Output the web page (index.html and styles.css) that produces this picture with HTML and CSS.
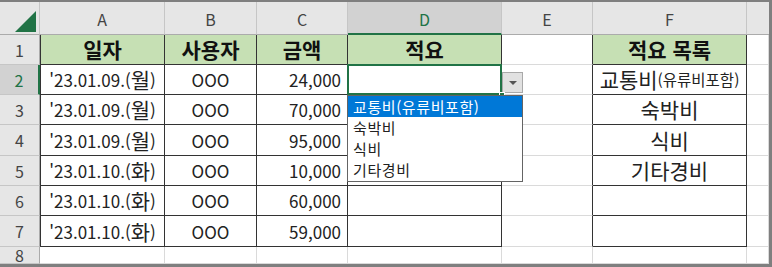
FILE: index.html
```html
<!DOCTYPE html>
<html lang="ko">
<head>
<meta charset="utf-8">
<link rel="stylesheet" href="styles.css">
</head>
<body>
<div class="frame">
  <div class="sheet">
    <div class="ch corner"><svg class="tri" width="21" height="21" viewBox="0 0 21 21"><polygon points="21,0 21,21 0,21" fill="#217346"/></svg></div>
    <div class="ch">A</div>
    <div class="ch">B</div>
    <div class="ch">C</div>
    <div class="ch sel">D</div>
    <div class="ch">E</div>
    <div class="ch">F</div>
    <div class="ch last"></div>

    <div class="rh">1</div>
    <div class="c t hd first">일자</div>
    <div class="c t hd">사용자</div>
    <div class="c t hd">금액</div>
    <div class="c t hd">적요</div>
    <div class="c e"></div>
    <div class="c t hd">적요 목록</div>
    <div class="c g"></div>

    <div class="rh rsel">2</div>
    <div class="c t first">'23.01.09.(<span class="k">월</span>)</div>
    <div class="c t">OOO</div>
    <div class="c t num">24,000</div>
    <div class="c t active"><span class="handle"></span><span class="ddbtn"><span class="ddarrow"></span></span>
      <div class="ddlist">
        <div class="dditem on">교통비(유류비포함)</div>
        <div class="dditem">숙박비</div>
        <div class="dditem">식비</div>
        <div class="dditem">기타경비</div>
      </div>
    </div>
    <div class="c e"></div>
    <div class="c t"><span class="k">교통비</span><span class="small">(유류비포함)</span></div>
    <div class="c g"></div>

    <div class="rh">3</div>
    <div class="c t first">'23.01.09.(<span class="k">월</span>)</div>
    <div class="c t">OOO</div>
    <div class="c t num">70,000</div>
    <div class="c t"></div>
    <div class="c e"></div>
    <div class="c t"><span class="k">숙박비</span></div>
    <div class="c g"></div>

    <div class="rh">4</div>
    <div class="c t first">'23.01.09.(<span class="k">월</span>)</div>
    <div class="c t">OOO</div>
    <div class="c t num">95,000</div>
    <div class="c t"></div>
    <div class="c e"></div>
    <div class="c t"><span class="k">식비</span></div>
    <div class="c g"></div>

    <div class="rh">5</div>
    <div class="c t first">'23.01.10.(<span class="k">화</span>)</div>
    <div class="c t">OOO</div>
    <div class="c t num">10,000</div>
    <div class="c t"></div>
    <div class="c e"></div>
    <div class="c t"><span class="k">기타경비</span></div>
    <div class="c g"></div>

    <div class="rh">6</div>
    <div class="c t first">'23.01.10.(<span class="k">화</span>)</div>
    <div class="c t">OOO</div>
    <div class="c t num">60,000</div>
    <div class="c t"></div>
    <div class="c e"></div>
    <div class="c t"></div>
    <div class="c g"></div>

    <div class="rh">7</div>
    <div class="c t first">'23.01.10.(<span class="k">화</span>)</div>
    <div class="c t">OOO</div>
    <div class="c t num">59,000</div>
    <div class="c t"></div>
    <div class="c e"></div>
    <div class="c t"></div>
    <div class="c g"></div>

    <div class="rh">8</div>
    <div class="c g"></div>
    <div class="c g"></div>
    <div class="c g"></div>
    <div class="c g"></div>
    <div class="c g"></div>
    <div class="c g"></div>
    <div class="c g"></div>
  </div>
</div>
</body>
</html>
```

FILE: styles.css
```css
* { box-sizing: border-box; }
html, body { margin: 0; padding: 0; background: #fff; }
body { font-family: "Noto Sans CJK KR", "Noto Sans", sans-serif; color: #222; }

.frame {
  width: 772px;
  height: 267px;
  border-top: 2px solid #7f7f7f;
  border-right: 3px solid #7f7f7f;
  border-bottom: 3px solid #7f7f7f;
  overflow: hidden;
}

.sheet {
  display: grid;
  grid-template-columns: 40px 125px 92px 91px 154px 91px 154px 22px;
  grid-template-rows: 33px 30px 30px 30px 31px 30px 30px 31px 17px;
  height: 262px;
}

.ch {
  background: #e6e6e6;
  border-right: 1px solid #c6c6c6;
  border-bottom: 1px solid #ababab;
  display: flex;
  align-items: center;
  justify-content: center;
  font-size: 16px;
  color: #444;
  padding-top: 2px;
}
.ch.last { border-right: none; }
.ch.sel {
  background: #d2d2d2;
  color: #217346;
  border-bottom: 2px solid #217346;
}
.corner {
  align-items: flex-end;
  justify-content: flex-end;
  padding: 0 3px 2px 0;
}
.tri { display: block; }

.rh {
  background: #e6e6e6;
  border-right: 1px solid #ababab;
  border-bottom: 1px solid #c6c6c6;
  display: flex;
  align-items: center;
  justify-content: center;
  font-size: 16px;
  color: #444;
}
.rh.rsel {
  background: #d2d2d2;
  color: #217346;
  border-right: 2px solid #217346;
}

.c {
  border-right: 1px solid #dadada;
  border-bottom: 1px solid #dadada;
  display: flex;
  align-items: center;
  justify-content: center;
  font-size: 17px;
  color: #222;
  white-space: nowrap;
  line-height: 1;
}
.c.t {
  border-right: 1px solid #333;
  border-bottom: 1px solid #333;
}
.c.first { border-left: 1px solid #333; }
.c.e { border-right: 1px solid #333; }
.c.hd {
  background: #c6e0b4;
  font-weight: 700;
  font-size: 21px;
  color: #111;
}
.c.num {
  justify-content: flex-end;
  padding-right: 6px;
}
.k { font-size: 21px; }
.small { font-size: 15.5px; }

.active { position: relative; }
.active::after {
  content: "";
  position: absolute;
  left: -1px;
  top: -1px;
  right: -1px;
  bottom: -1px;
  border: 2px solid #217346;
  pointer-events: none;
}
.handle {
  position: absolute;
  right: -4px;
  bottom: -4px;
  width: 6px;
  height: 6px;
  background: #217346;
  border: 1px solid #fff;
  z-index: 3;
}
.ddbtn {
  position: absolute;
  left: 154px;
  top: 7px;
  width: 21px;
  height: 21px;
  background: #e1e1e1;
  border: 1px solid #a9a9a9;
  display: flex;
  align-items: center;
  justify-content: center;
  z-index: 2;
}
.ddarrow {
  width: 0;
  height: 0;
  border-left: 4px solid transparent;
  border-right: 4px solid transparent;
  border-top: 4px solid #555;
}
.ddlist {
  position: absolute;
  left: -1px;
  top: 30px;
  width: 176px;
  background: #fff;
  border: 1px solid #646464;
  z-index: 4;
  padding-bottom: 1px;
}
.dditem {
  height: 21px;
  line-height: 21px;
  display: flex;
  align-items: center;
  padding-left: 5px;
  font-size: 15px;
  letter-spacing: 0.6px;
  color: #222;
  white-space: nowrap;
}
.dditem.on {
  background: #0078d7;
  color: #fff;
}
```
